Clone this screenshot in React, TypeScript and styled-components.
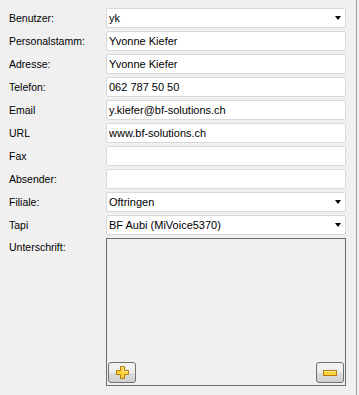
import styled, { createGlobalStyle } from 'styled-components';

const GlobalStyle = createGlobalStyle`
    html, body {
        margin: 0;
        padding: 0;
        background: #f0f0f0;
    }
    * {
        box-sizing: border-box;
    }
`;

type Field = {
    label: string;
    value: string;
    combo?: boolean;
};

const fields: Field[] = [
    { label: 'Benutzer:', value: 'yk', combo: true },
    { label: 'Personalstamm:', value: 'Yvonne Kiefer' },
    { label: 'Adresse:', value: 'Yvonne Kiefer' },
    { label: 'Telefon:', value: '062 787 50 50' },
    { label: 'Email', value: 'y.kiefer@bf-solutions.ch' },
    { label: 'URL', value: 'www.bf-solutions.ch' },
    { label: 'Fax', value: '' },
    { label: 'Absender:', value: '' },
    { label: 'Filiale:', value: 'Oftringen', combo: true },
    { label: 'Tapi', value: 'BF Aubi (MiVoice5370)', combo: true },
];

const PlusIcon = () => (
    <svg width="13" height="13" viewBox="0 0 13 13">
        <path
            d="M4.5 0.5h4v4h4v4h-4v4h-4v-4h-4v-4h4z"
            fill="#fcd23c"
            stroke="#b8780a"
            strokeWidth="1"
        />
        <path d="M5.5 1.5h2v4h4v1" fill="none" stroke="#ffef9a" strokeWidth="1" />
    </svg>
);

const MinusIcon = () => (
    <svg width="14" height="6" viewBox="0 0 14 6">
        <rect x="0.5" y="0.5" width="13" height="5" fill="#fcd23c" stroke="#b8780a" strokeWidth="1" />
        <path d="M1.5 1.5h11" stroke="#ffef9a" strokeWidth="1" />
    </svg>
);

const App = () => {
    return (
        <>
            <GlobalStyle />
            <Panel>
                <Form>
                    {fields.map((f) => (
                        <Row key={f.label}>
                            <Label>{f.label}</Label>
                            <Input>
                                <Value>{f.value}</Value>
                                {f.combo && <Arrow />}
                            </Input>
                        </Row>
                    ))}
                    <Row>
                        <Label $top>Unterschrift:</Label>
                        <SignatureBox>
                            <ButtonBar>
                                <IconButton aria-label="add"><PlusIcon /></IconButton>
                                <IconButton aria-label="remove"><MinusIcon /></IconButton>
                            </ButtonBar>
                        </SignatureBox>
                    </Row>
                </Form>
            </Panel>
        </>
    );
};

const Panel = styled.div`
    width: 357px;
    height: 395px;
    border-right: 1px solid #a0a0a0;
    background: #f0f0f0;
    padding: 8px 0 0 9px;
    font-family: 'Liberation Sans', Arial, sans-serif;
    font-size: 11px;
    color: #000;
`;

const Form = styled.div`
    display: flex;
    flex-direction: column;
    gap: 3px;
`;

const Row = styled.div`
    display: grid;
    grid-template-columns: 97px 240px;
    align-items: center;
`;

const Label = styled.div<{ $top?: boolean }>`
    font-size: 10.5px;
    align-self: ${(p) => (p.$top ? 'start' : 'center')};
    padding-top: ${(p) => (p.$top ? '3px' : '0')};
    white-space: nowrap;
`;

const Input = styled.div`
    height: 20px;
    background: #fff;
    border: 1px solid #d9d9d9;
    border-radius: 2px;
    display: flex;
    align-items: center;
    justify-content: space-between;
    padding: 0 3px 0 2px;
`;

const Value = styled.span`
    white-space: nowrap;
    line-height: 18px;
`;

const Arrow = styled.span`
    width: 0;
    height: 0;
    border-left: 3.5px solid transparent;
    border-right: 3.5px solid transparent;
    border-top: 4px solid #000;
    margin-right: 1px;
`;

const SignatureBox = styled.div`
    height: 148px;
    border: 1px solid #6e6e6e;
    display: flex;
    flex-direction: column;
    justify-content: flex-end;
    padding: 1px 1px 2px 1px;
`;

const ButtonBar = styled.div`
    display: flex;
    justify-content: space-between;
`;

const IconButton = styled.button`
    width: 28px;
    height: 21px;
    padding: 0;
    border: 1px solid #707070;
    border-radius: 3px;
    background: linear-gradient(to bottom, #f2f2f2 0%, #ebebeb 50%, #dddddd 51%, #cfcfcf 100%);
    display: flex;
    align-items: center;
    justify-content: center;
`;

export default App;
